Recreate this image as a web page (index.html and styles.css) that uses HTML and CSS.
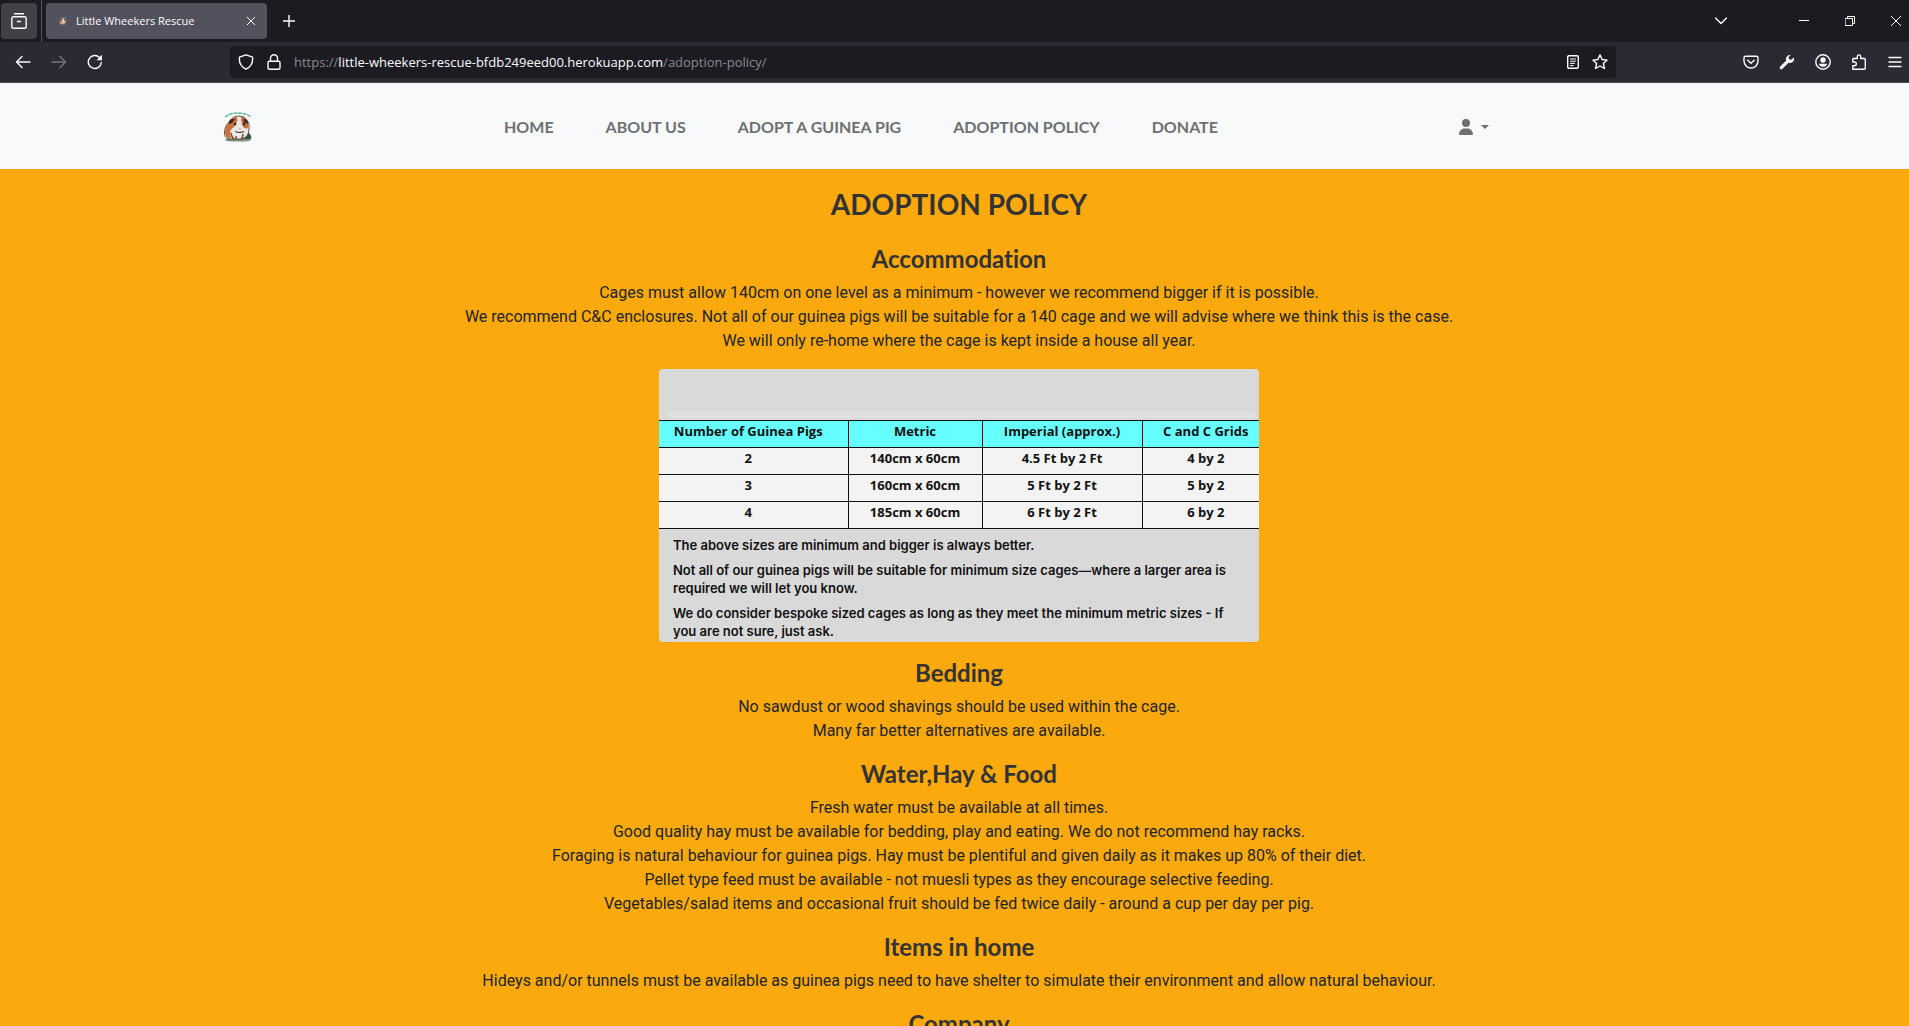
FILE: index.html
```html
<!DOCTYPE html>
<html lang="en">
<head>
<meta charset="utf-8">
<meta name="viewport" content="width=device-width, initial-scale=1">
<title>Little Wheekers Rescue</title>
<link rel="stylesheet" href="styles.css">
</head>
<body>
<svg class="defs" width="0" height="0" aria-hidden="true">
  <symbol id="pig" viewBox="0 0 30 32">
    <path d="M2 6Q7 2 15 2T28 6" fill="none" stroke="#62b094" stroke-width="1.300" stroke-dasharray="4 .6"/>
    <ellipse cx="15" cy="29" rx="13" ry="1.600" fill="#7e9180"/>
    <path d="M20 28q0-4 3-4 1-4 3-2 3 3 2 6z" fill="#2f5a35"/>
    <path d="M7 10Q10 5 16 5q6 0 8 4 3 3 2 9 0 8-7 10H6Q1 27 1.500 21 2 14 7 10z" fill="#ece7e5" stroke="#4a2d24" stroke-width=".8"/>
    <path d="M7 10q3-5 7-4.500 1 4-1 8-2 3-4 4-3 2-1 10-6 0-6-6.500 0-6 5-11z" fill="#c9703a"/>
    <path d="M18 5.500q5 1 7 6 1 4-1 6-4 0-5-4-1-4-1-8z" fill="#c9703a"/>
    <path d="M6 10q2-3 6-2l-3 4-3 1zM20 8q5 0 5 5l-4-2z" fill="#3b2622"/>
    <circle cx="12" cy="13" r="1.200" fill="#222"/><circle cx="21" cy="13" r="1.200" fill="#222"/>
    <path d="M15.500 17.500h3L17 19z" fill="#d98f86"/>
    <path d="M12.500 20.500q4 2 8.500 0" fill="none" stroke="#333" stroke-width="1.200"/>
    <path d="M8 22q1 5 3 6M13 25v3M20 23q0 4-2 5" fill="none" stroke="#7a432c" stroke-width="1.400"/>
  </symbol>
</svg>

<div class="browser">
  <div class="tabs">
    <button class="view" aria-label="Firefox view"><svg width="16" height="16" viewBox="0 0 16 16"><path d="M3.500.8h9M2.600 3.700h10.800q1.800 0 1.800 1.800v7.900q0 1.800-1.800 1.800H2.600Q.8 15.200.8 13.400V5.500q0-1.800 1.800-1.800zM6.500 8.500h3"/></svg></button>
    <span class="divider"></span>
    <div class="tab">
      <svg class="favicon" width="8" height="8"><use href="#pig"/></svg>
      <span class="tab-title">Little Wheekers Rescue</span>
      <button class="thin" aria-label="Close tab"><svg width="8" height="8" viewBox="0 0 8 8"><path d="M0 0l8 8M8 0L0 8"/></svg></button>
    </div>
    <button class="new-tab" aria-label="New tab"><svg width="12" height="12" viewBox="0 0 12 12"><path d="M6 0v12M0 6h12"/></svg></button>
    <div class="window-controls">
      <button aria-label="List all tabs"><svg width="12" height="8" viewBox="0 0 12 8"><path d="M.5 1L6 6.500 11.500 1"/></svg></button>
      <button class="minimise thin" aria-label="Minimise"><svg width="10" height="10" viewBox="0 0 10 10"><path d="M0 4.500h10"/></svg></button>
      <button class="thin" aria-label="Restore"><svg width="10" height="10" viewBox="0 0 10 10"><path d="M.5 2.500h7v7h-7zM2.500 2.500v-2h7v7h-2"/></svg></button>
      <button class="thin" aria-label="Close window"><svg width="10" height="10" viewBox="0 0 10 10"><path d="M0 0l10 10M10 0L0 10"/></svg></button>
    </div>
  </div>
  <div class="toolbar">
    <div class="history">
      <button aria-label="Back"><svg width="16" height="16" viewBox="0 0 16 16"><path d="M15 8H1.500M7 2.500L1.500 8 7 13.500"/></svg></button>
      <button class="disabled" aria-label="Forward" disabled><svg width="16" height="16" viewBox="0 0 16 16"><path d="M1 8h13.500M9 2.500L14.500 8 9 13.500"/></svg></button>
      <button aria-label="Reload"><svg width="16" height="16" viewBox="0 0 16 16"><path d="M14.300 8.500A6.500 6.500 0 1 1 12.500 3.500l1 1"/><path class="solid" d="M15 .8v5.400H9.600z"/></svg></button>
    </div>
    <div class="address">
      <svg width="16" height="16" viewBox="0 0 16 16"><path d="M8 .8l6.600 2.400v2.500q0 6-6.600 9.500-6.600-3.500-6.600-9.500V3.200z"/></svg>
      <svg width="14" height="16" viewBox="0 0 14 16"><path d="M3.500 7V4.300a3.500 3.500 0 0 1 7 0V7M2.500 7.200h9q1.500 0 1.500 1.500v5q0 1.500-1.500 1.500h-9Q1 15.200 1 13.700v-5q0-1.500 1.500-1.500z"/></svg>
      <span class="url">https://<b>little-wheekers-rescue-bfdb249eed00.herokuapp.com</b>/adoption-policy/</span>
      <button aria-label="Reader view"><svg width="12" height="14" viewBox="0 0 12 14"><path d="M2 .7h8Q11.300.7 11.300 2v10q0 1.300-1.300 1.300H2Q.7 13.300.7 12V2Q.7.700 2 .7z"/><path d="M3.500 4h5M3.500 6.200h5M3.500 8.400h4M3.500 10.600h2.500" stroke-width="1"/></svg></button>
      <button aria-label="Bookmark"><svg width="16" height="16" viewBox="0 0 16 16"><path d="M8 .9l2.100 4.600 5 .6-3.700 3.400 1 5L8 12l-4.400 2.500 1-5L.9 6.100l5-.6z"/></svg></button>
    </div>
    <div class="actions">
      <button aria-label="Pocket"><svg width="16" height="16" viewBox="0 0 16 16"><path d="M2.500 2.200h11q1.500 0 1.500 1.500v3.300a7 7 0 0 1-14 0V3.700q0-1.500 1.500-1.500zM4.700 6.200L8 9.300l3.300-3.100"/></svg></button>
      <button aria-label="Developer tools"><svg width="16" height="16" viewBox="0 0 16 16"><path class="solid" d="M11.800.8q-3.300-.1-4.600 2.600-.6 1.600.1 3.100L1 12.800q-.8 1.500.2 2.200 1 .8 2-.1l6.300-6.200q3.300.9 5-1.700 1-2 .4-3.600l-2.700 2.400-2.200-.6-.5-2z"/></svg></button>
      <button aria-label="Account"><svg width="16" height="16" viewBox="0 0 16 16"><circle cx="8" cy="8" r="7.200"/><circle class="solid" cx="8" cy="6" r="2.700"/><path class="solid" d="M3.800 9.700h8.400Q11.500 12.800 8 12.800T3.800 9.700z"/></svg></button>
      <button aria-label="Extensions"><svg width="16" height="16" viewBox="0 0 16 16"><path d="M1.800 15.200V11.700h1.700a1.800 1.800 0 0 0 0-3.700H1.800V5.200q0-.7.7-.7h3.800V2.600a1.700 1.700 0 0 1 3.400 0v1.900h3.600q1 0 1 1v8.700q0 1-1 1z"/></svg></button>
      <button aria-label="Menu"><svg width="16" height="12" viewBox="0 0 16 12"><path d="M2 1.500h12M2 6h12M2 10.500h12"/></svg></button>
    </div>
  </div>
</div>

<header class="site-header">
  <a class="brand" href="#" aria-label="Little Wheekers Rescue"><svg width="30" height="32"><use href="#pig"/></svg></a>
  <nav class="site-nav">
    <a href="#">HOME</a>
    <a href="#">ABOUT US</a>
    <a href="#">ADOPT A GUINEA PIG</a>
    <a href="#">ADOPTION POLICY</a>
    <a href="#">DONATE</a>
  </nav>
  <button class="account" aria-label="Account menu"><svg width="14" height="16" viewBox="0 0 448 512"><path d="M224 256A128 128 0 1 0 224 0a128 128 0 1 0 0 256zm-45.700 48C79.800 304 0 383.800 0 482.300 0 498.700 13.300 512 29.700 512h388.600c16.400 0 29.700-13.300 29.700-29.700C448 383.800 368.200 304 269.700 304z"/></svg><span class="caret"></span></button>
</header>

<main class="policy">
  <h1>ADOPTION POLICY</h1>
  <section>
    <h2>Accommodation</h2>
    <p>Cages must allow 140cm on one level as a minimum - however we recommend bigger if it is possible.<br>
    We recommend C&amp;C enclosures. Not all of our guinea pigs will be suitable for a 140 cage and we will advise where we think this is the case.<br>
    We will only re-home where the cage is kept inside a house all year.</p>
    <div class="sizes">
      <div class="strip"></div>
      <table>
        <colgroup><col class="pigs"><col class="metric"><col class="imperial"><col></colgroup>
        <thead><tr><th>Number of Guinea Pigs</th><th>Metric</th><th>Imperial (approx.)</th><th>C and C Grids</th></tr></thead>
        <tbody>
          <tr><td>2</td><td>140cm x 60cm</td><td>4.5 Ft by 2 Ft</td><td>4 by 2</td></tr>
          <tr><td>3</td><td>160cm x 60cm</td><td>5 Ft by 2 Ft</td><td>5 by 2</td></tr>
          <tr><td>4</td><td>185cm x 60cm</td><td>6 Ft by 2 Ft</td><td>6 by 2</td></tr>
        </tbody>
      </table>
      <div class="notes">
        <p>The above sizes are minimum and bigger is always better.</p>
        <p>Not all of our guinea pigs will be suitable for minimum size cages—where a larger area is<br>required we will let you know.</p>
        <p>We do consider bespoke sized cages as long as they meet the minimum metric sizes - If<br>you are not sure, just ask.</p>
      </div>
    </div>
  </section>
  <section>
    <h2>Bedding</h2>
    <p>No sawdust or wood shavings should be used within the cage.<br>
    Many far better alternatives are available.</p>
  </section>
  <section>
    <h2>Water,Hay &amp; Food</h2>
    <p>Fresh water must be available at all times.<br>
    Good quality hay must be available for bedding, play and eating. We do not recommend hay racks.<br>
    Foraging is natural behaviour for guinea pigs. Hay must be plentiful and given daily as it makes up 80% of their diet.<br>
    Pellet type feed must be available - not muesli types as they encourage selective feeding.<br>
    Vegetables/salad items and occasional fruit should be fed twice daily - around a cup per day per pig.</p>
  </section>
  <section>
    <h2>Items in home</h2>
    <p>Hideys and/or tunnels must be available as guinea pigs need to have shelter to simulate their environment and allow natural behaviour.</p>
  </section>
  <section>
    <h2>Company</h2>
  </section>
</main>
</body>
</html>
```
FILE: styles.css
```css
* { box-sizing: border-box; }

body {
  margin: 0;
  height: 100vh;
  display: flex;
  flex-direction: column;
  overflow: hidden;
  background: #fba90d;
  color: #212529;
  font: 16px/24px Roboto, sans-serif;
}

.defs { display: none; }

button {
  display: flex;
  align-items: center;
  justify-content: center;
  padding: 0;
  border: 0;
  background: none;
  color: inherit;
}

/* Browser window */
.browser {
  flex: none;
  background: #2b2a33;
  border-bottom: 1px solid #4a4956;
  color: #fbfbfe;
  font: 11px/16px "Open Sans", sans-serif;
}

.browser svg {
  flex: none;
  fill: none;
  stroke: currentColor;
  stroke-width: 1.4;
  stroke-linejoin: round;
  stroke-linecap: round;
}

.browser .thin svg { stroke-width: 1; }
.browser .solid { fill: currentColor; stroke: none; }
.browser .favicon { stroke: none; }

.tabs {
  display: flex;
  align-items: center;
  height: 42px;
  padding-left: 1px;
  background: #1c1b22;
}

.view {
  width: 36px;
  height: 36px;
  border-radius: 4px;
  background: #424147;
}

.divider {
  width: 1px;
  height: 42px;
  margin: 0 4px;
  background: #55545e;
}

.tab {
  display: flex;
  align-items: center;
  width: 221px;
  height: 36px;
  padding: 0 12px 0 13px;
  border-radius: 4px;
  background: #52525e;
}

.tab-title {
  flex: 1;
  margin-left: 9px;
}

.new-tab { margin-left: 16px; }

.window-controls {
  display: flex;
  align-items: center;
  gap: 36px;
  margin-left: auto;
  padding-right: 8px;
}

.minimise { margin-left: 36px; }

.toolbar {
  display: flex;
  align-items: center;
  height: 40px;
  padding: 0 6px 0 15px;
}

.history, .actions {
  display: flex;
  align-items: center;
  gap: 20px;
}

.actions { margin-left: auto; }
.disabled { color: #75747c; }

.address {
  display: flex;
  align-items: center;
  gap: 13px;
  width: 1386px;
  height: 32px;
  margin-left: 127px;
  padding: 0 8px;
  border-radius: 4px;
  background: #1c1b22;
}

.url {
  flex: 1;
  color: #88878f;
  font-size: 13px;
}

.url b {
  color: #fbfbfe;
  font-weight: 400;
}

/* Site header */
.site-header {
  flex: none;
  display: flex;
  align-items: center;
  height: 86px;
  padding: 2px 420px 0 223px;
  background: #f8f9fa;
}

.brand { display: flex; }

.site-nav {
  display: flex;
  gap: 52px;
  margin-left: 251px;
}

.site-nav a {
  color: #6e6f70;
  font: 700 16px/24px Lato, sans-serif;
  text-decoration: none;
}

.account {
  gap: 8px;
  margin-left: auto;
  color: #6e6f70;
}

.account svg { fill: currentColor; }

.caret {
  border: 4px solid transparent;
  border-top-color: currentColor;
  border-bottom: 0;
}

/* Policy text */
.policy {
  flex: 1;
  min-height: 0;
  overflow: hidden;
  padding: 18px 0 0 9px;
  text-align: center;
}

h1, h2 {
  margin: 0;
  color: #333;
  font-family: Lato, sans-serif;
  font-weight: 700;
  font-variant-ligatures: none;
}

h1 {
  margin-bottom: 23px;
  font-size: 28px;
  line-height: 34px;
}

h2 {
  margin-bottom: 8px;
  font-size: 24px;
  line-height: 29px;
}

p { margin: 0; }

section { margin-bottom: 16px; }

/* Cage size chart */
.sizes {
  width: 600px;
  max-width: 100%;
  margin: 16px auto 0;
  padding-top: 42px;
  overflow: hidden;
  border-radius: 4px;
  background: #d9d9d9;
  color: #111;
}

.strip {
  height: 7px;
  margin: 0 4px 2px 9px;
  background: #e2dfe0;
}

table {
  width: 100%;
  table-layout: fixed;
  border-collapse: collapse;
  background: #f3f3f3;
  font: 700 13px/18px "Open Sans", sans-serif;
}

.pigs { width: 189px; }
.metric { width: 134px; }
.imperial { width: 160px; }

th, td {
  height: 27px;
  padding: 0 0 6px;
  border: 1px solid #111;
}

th { background: #66ffff; }

tr > :first-child {
  padding-right: 10px;
  border-left: 0;
}

tr > :last-child {
  padding-left: 10px;
  border-right: 0;
}

.notes {
  display: grid;
  gap: 7px;
  padding: 7px 0 2px 14px;
  text-align: left;
  white-space: nowrap;
  font: 600 13px/18px Inter, sans-serif;
}
```
